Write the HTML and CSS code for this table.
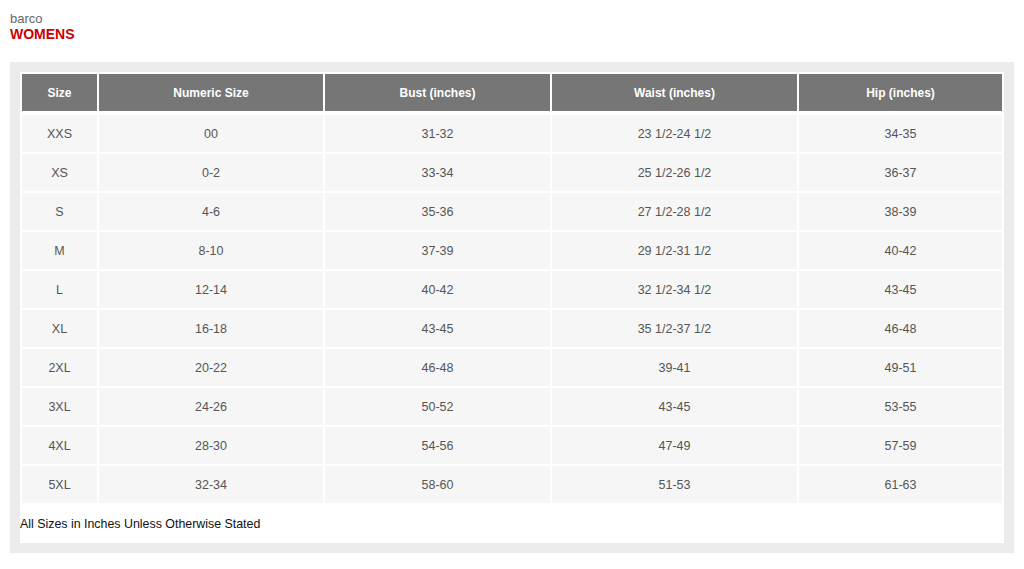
FILE: index.html
```html
<!DOCTYPE html>
<html lang="en">
<head>
<meta charset="utf-8">
<title>barco WOMENS size chart</title>
<link rel="stylesheet" href="styles.css">
</head>
<body>
<div class="brand">
  <div class="brand-name">barco</div>
  <div class="brand-cat">WOMENS</div>
</div>
<div class="chart-frame">
  <div class="chart-inner">
    <table class="chart">
      <thead>
        <tr>
          <th class="c1">Size</th>
          <th class="c2">Numeric Size</th>
          <th class="c3">Bust (inches)</th>
          <th class="c4">Waist (inches)</th>
          <th class="c5">Hip (inches)</th>
        </tr>
      </thead>
      <tbody>
        <tr><td>XXS</td><td>00</td><td>31-32</td><td>23 1/2-24 1/2</td><td>34-35</td></tr>
        <tr><td>XS</td><td>0-2</td><td>33-34</td><td>25 1/2-26 1/2</td><td>36-37</td></tr>
        <tr><td>S</td><td>4-6</td><td>35-36</td><td>27 1/2-28 1/2</td><td>38-39</td></tr>
        <tr><td>M</td><td>8-10</td><td>37-39</td><td>29 1/2-31 1/2</td><td>40-42</td></tr>
        <tr><td>L</td><td>12-14</td><td>40-42</td><td>32 1/2-34 1/2</td><td>43-45</td></tr>
        <tr><td>XL</td><td>16-18</td><td>43-45</td><td>35 1/2-37 1/2</td><td>46-48</td></tr>
        <tr><td>2XL</td><td>20-22</td><td>46-48</td><td>39-41</td><td>49-51</td></tr>
        <tr><td>3XL</td><td>24-26</td><td>50-52</td><td>43-45</td><td>53-55</td></tr>
        <tr><td>4XL</td><td>28-30</td><td>54-56</td><td>47-49</td><td>57-59</td></tr>
        <tr><td>5XL</td><td>32-34</td><td>58-60</td><td>51-53</td><td>61-63</td></tr>
      </tbody>
    </table>
    <div class="chart-note">All Sizes in Inches Unless Otherwise Stated</div>
  </div>
</div>
</body>
</html>
```
FILE: styles.css
```css
html, body {
  margin: 0;
  padding: 0;
  background: #ffffff;
  font-family: "Liberation Sans", Arial, sans-serif;
}

.brand {
  padding: 11px 10px 0 10px;
  height: 62px;
  box-sizing: border-box;
}

.brand-name {
  font-size: 13px;
  line-height: 15px;
  color: #666666;
}

.brand-cat {
  font-size: 14px;
  line-height: 17px;
  font-weight: bold;
  color: #cc0000;
}

.chart-frame {
  margin-left: 10px;
  width: 1004px;
  padding: 10px;
  box-sizing: border-box;
  background: #ebebeb;
}

.chart-inner {
  background: #ffffff;
}

.chart {
  width: 100%;
  border-collapse: separate;
  border-spacing: 2px;
  table-layout: fixed;
  font-size: 12px;
}

.chart th {
  background: #767676;
  color: #ffffff;
  font-weight: bold;
  height: 37px;
  padding: 0;
  border-bottom: 2px solid #ffffff;
  text-align: center;
  vertical-align: middle;
}

.chart .c1 { width: 75px; }
.chart .c2 { width: 224px; }
.chart .c3 { width: 225px; }
.chart .c4 { width: 245px; }
.chart .c5 { width: 203px; }

.chart td {
  background: #f6f6f6;
  color: #555555;
  height: 37px;
  padding: 0;
  text-align: center;
  vertical-align: middle;
  font-size: 12.5px;
}

.chart-note {
  height: 38px;
  line-height: 38px;
  font-size: 12.4px;
  color: #111111;
}
```
